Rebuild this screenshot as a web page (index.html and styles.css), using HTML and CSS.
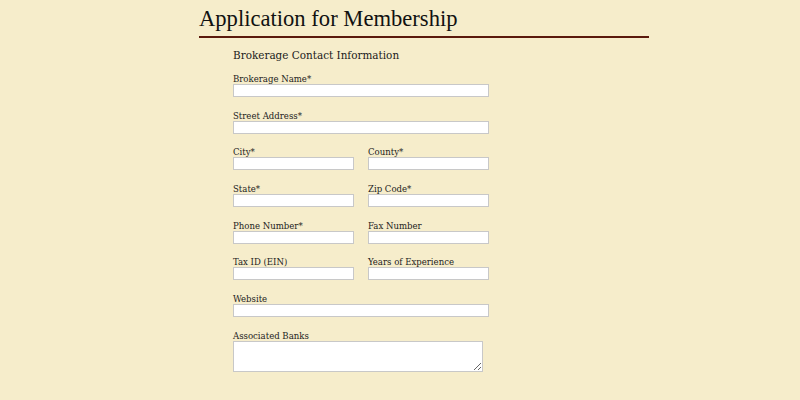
FILE: index.html
```html
<!DOCTYPE html>
<html>
<head>
<meta charset="utf-8">
<link rel="stylesheet" href="styles.css">
</head>
<body>
<div class="page">
  <h1 class="title">Application for Membership</h1>
  <div class="form">
    <h2 class="section">Brokerage Contact Information</h2>
    <div class="field full">
      <label class="lbl">Brokerage Name*</label>
      <input class="inp" type="text">
    </div>
    <div class="field full">
      <label class="lbl">Street Address*</label>
      <input class="inp" type="text">
    </div>
    <div class="row">
      <div class="field half"><label class="lbl">City*</label><input class="inp" type="text"></div>
      <div class="field half"><label class="lbl">County*</label><input class="inp" type="text"></div>
    </div>
    <div class="row">
      <div class="field half"><label class="lbl">State*</label><input class="inp" type="text"></div>
      <div class="field half"><label class="lbl">Zip Code*</label><input class="inp" type="text"></div>
    </div>
    <div class="row">
      <div class="field half"><label class="lbl">Phone Number*</label><input class="inp" type="text"></div>
      <div class="field half"><label class="lbl">Fax Number</label><input class="inp" type="text"></div>
    </div>
    <div class="row">
      <div class="field half"><label class="lbl">Tax ID (EIN)</label><input class="inp" type="text"></div>
      <div class="field half"><label class="lbl">Years of Experience</label><input class="inp" type="text"></div>
    </div>
    <div class="field full">
      <label class="lbl">Website</label>
      <input class="inp" type="text">
    </div>
    <div class="field full last">
      <label class="lbl">Associated Banks</label>
      <textarea class="ta"></textarea>
    </div>
  </div>
</div>
</body>
</html>
```
FILE: styles.css
```css
html, body {
  margin: 0;
  padding: 0;
  background: #f6edcb;
}
body {
  font-family: "DejaVu Serif Condensed", "DejaVu Serif", serif;
  color: #222;
}
.page {
  margin-left: 199px;
  width: 450px;
}
.title {
  margin: 0;
  padding-top: 4px;
  font-family: "Liberation Serif", serif;
  font-weight: normal;
  font-size: 22.6px;
  line-height: 30px;
  color: #111;
  border-bottom: 2px solid #5b1a0c;
  padding-bottom: 2px;
}
.form {
  padding-left: 34px;
  display: flex;
  flex-direction: column;
}
.section {
  margin: 0;
  padding-top: 10px;
  font-weight: normal;
  font-size: 11.6px;
  line-height: 14px;
  height: 25px;
  color: #1a1a1a;
}
.field {
  display: flex;
  flex-direction: column;
  height: 36.7px;
}
.field.last { height: auto; }
.full { width: 256px; }
.half { width: 121px; }
.row {
  display: flex;
  gap: 14px;
}
.lbl {
  font-size: 9.5px;
  line-height: 11px;
  color: #1c1c1c;
}
.inp {
  box-sizing: border-box;
  flex-shrink: 0;
  margin: 0;
  height: 13px;
  width: 100%;
  border: 1px solid #c8c8c8;
  background: #fff;
  padding: 0;
}
.ta {
  box-sizing: border-box;
  flex-shrink: 0;
  margin: 0;
  width: 250px;
  height: 31px;
  border: 1px solid #c8c8c8;
  background: #fff;
  padding: 0;
}
```
